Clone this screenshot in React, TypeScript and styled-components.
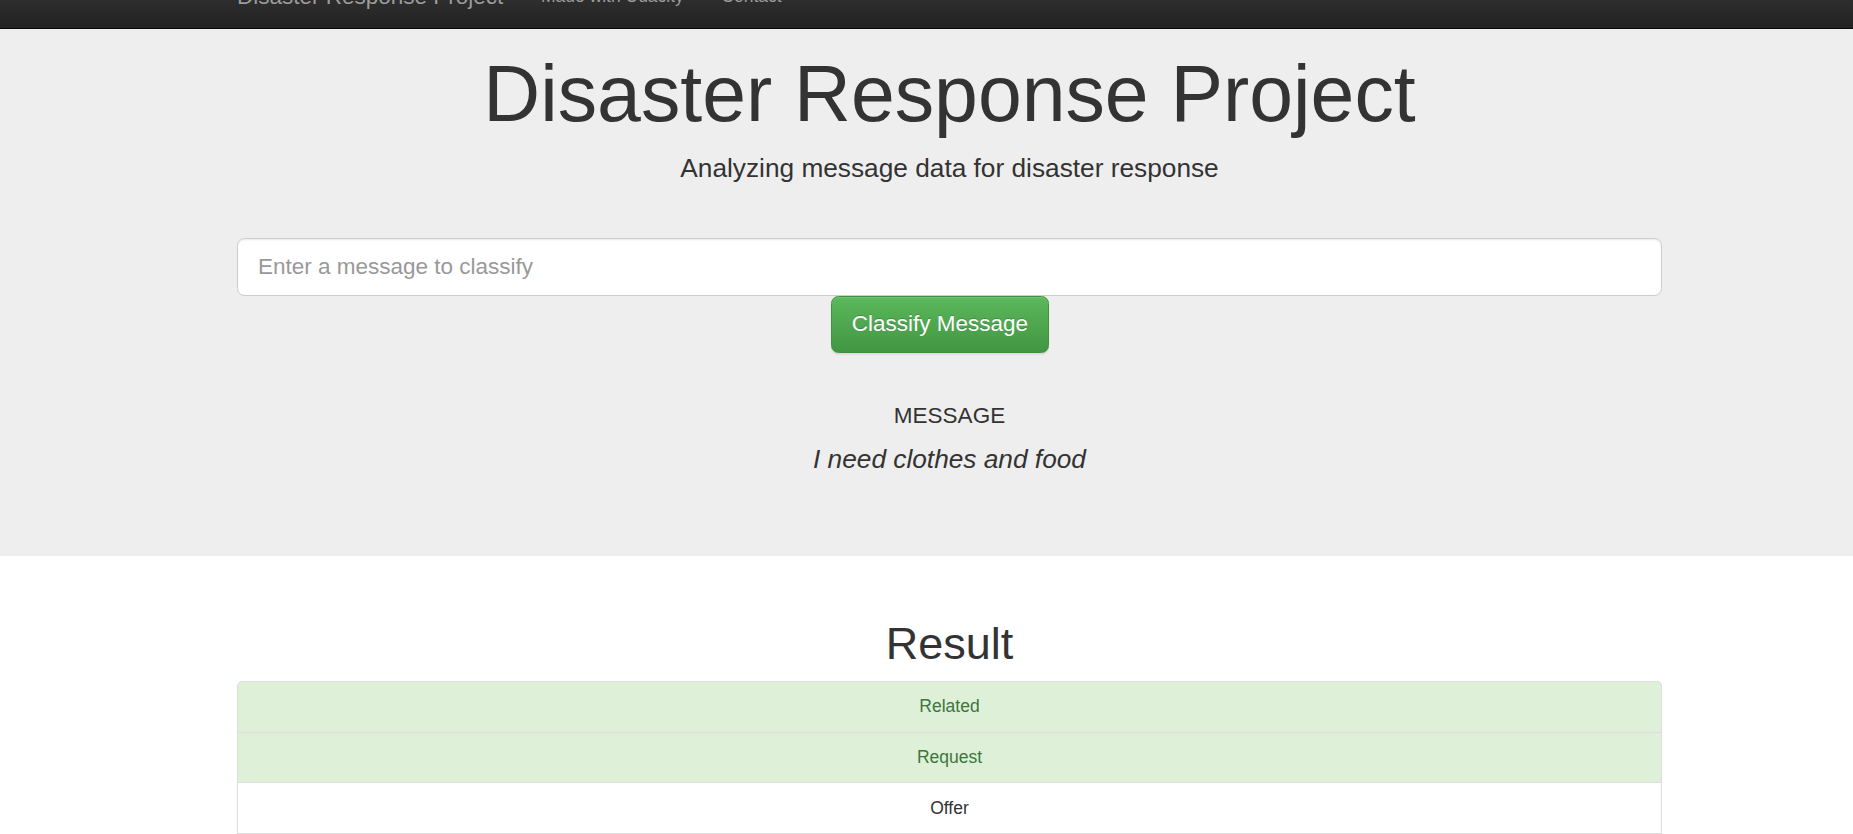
import React from "react";
import styled, { createGlobalStyle } from "styled-components";

const GlobalStyle = createGlobalStyle`
  html, body {
    margin: 0;
    padding: 0;
    background: #fff;
  }
  body {
    font-family: "Liberation Sans", Arial, Helvetica, sans-serif;
    color: #333;
    overflow: hidden;
  }
  * { box-sizing: border-box; }
`;

const Container = styled.div`
  width: 1425px;
  margin-left: calc(50% - 712.5px + 23px);
`;

const NavBar = styled.nav`
  height: 63.75px;
  margin-top: -34.75px;
  background-image: linear-gradient(to bottom, #3c3c3c 0%, #222 100%);
  border-bottom: 1.25px solid #080808;
`;

const NavInner = styled(Container)`
  display: flex;
  align-items: flex-start;
  height: 62.5px;
`;

const Brand = styled.a`
  display: block;
  padding: 18.75px 0;
  font-size: 22.5px;
  line-height: 25px;
  color: #9d9d9d;
  text-decoration: none;
  text-shadow: 0 -1.25px 0 rgba(0, 0, 0, 0.25);
`;

const NavLinks = styled.ul`
  display: flex;
  list-style: none;
  margin: 0 0 0 18.75px;
  padding: 0;
`;

const NavLink = styled.a`
  display: block;
  padding: 18.75px;
  font-size: 17.5px;
  line-height: 25px;
  color: #9d9d9d;
  text-decoration: none;
  text-shadow: 0 -1.25px 0 rgba(0, 0, 0, 0.25);
`;

const Jumbotron = styled.header`
  background: #eee;
  padding: 21.5px 0 77.5px;
`;

const Title = styled.h1`
  margin: 0 0 12.5px;
  font-size: 78.75px;
  line-height: 1.1;
  font-weight: 500;
  text-align: center;
  color: #333;
`;

const Lead = styled.p<{ $italic?: boolean }>`
  margin: 0;
  font-size: 26.25px;
  line-height: 37.5px;
  font-weight: 400;
  text-align: center;
  color: #333;
  font-style: ${(p) => (p.$italic ? "italic" : "normal")};
`;

const Divider = styled.hr`
  margin: 25px 0;
  height: 0;
  border: 0;
  border-top: 1.25px solid #eee;
`;

const QueryInput = styled.input`
  display: block;
  width: 100%;
  height: 57.5px;
  padding: 12.5px 20px;
  font-family: "Liberation Sans", Arial, sans-serif;
  font-size: 22.5px;
  line-height: 1.3333;
  color: #555;
  background: #fff;
  border: 1.25px solid #ccc;
  border-radius: 7.5px;
  box-shadow: inset 0 1.25px 1.25px rgba(0, 0, 0, 0.075);
  outline: none;
  &::placeholder {
    color: #999;
  }
`;

const ButtonRow = styled.div`
  padding-left: 41.66667%;
`;

const ClassifyButton = styled.button`
  display: inline-block;
  height: 57.5px;
  padding: 12.5px 20px;
  font-family: "Liberation Sans", Arial, sans-serif;
  font-size: 22.5px;
  line-height: 30px;
  color: #fff;
  background-image: linear-gradient(to bottom, #5cb85c 0%, #419641 100%);
  border: 1.25px solid #3e8f3e;
  border-radius: 7.5px;
  text-shadow: 0 -1.25px 0 rgba(0, 0, 0, 0.2);
  box-shadow: inset 0 1.25px 0 rgba(255, 255, 255, 0.15),
    0 1.25px 1.25px rgba(0, 0, 0, 0.075);
  cursor: pointer;
`;

const MessageLabel = styled.h4`
  margin: 0 0 12.5px;
  font-size: 22.5px;
  line-height: 1.1;
  font-weight: 400;
  text-align: center;
  color: #333;
`;

const ResultTitle = styled.h1`
  margin: 62.5px 0 12.5px;
  font-size: 45px;
  line-height: 1.1;
  font-weight: 500;
  text-align: center;
  color: #333;
`;

const ListGroup = styled.ul`
  margin: 0 0 25px;
  padding: 0;
  list-style: none;
`;

const ListItem = styled.li<{ $hit?: boolean }>`
  display: block;
  margin-bottom: -1.25px;
  padding: 12.5px 18.75px;
  font-size: 17.5px;
  line-height: 25px;
  text-align: center;
  border: 1.25px solid #ddd;
  background: ${(p) => (p.$hit ? "#dff0d8" : "#fff")};
  color: ${(p) => (p.$hit ? "#3c763d" : "#333")};
  &:first-child {
    border-top-left-radius: 5px;
    border-top-right-radius: 5px;
  }
`;

const results: { name: string; hit: boolean }[] = [
  { name: "Related", hit: true },
  { name: "Request", hit: true },
  { name: "Offer", hit: false },
  { name: "Aid Related", hit: true },
  { name: "Medical Help", hit: false },
  { name: "Medical Products", hit: false },
  { name: "Search And Rescue", hit: false },
  { name: "Security", hit: false },
  { name: "Military", hit: false },
  { name: "Child Alone", hit: false },
  { name: "Water", hit: false },
  { name: "Food", hit: true },
  { name: "Shelter", hit: false },
  { name: "Clothing", hit: true },
];

export default function App() {
  return (
    <>
      <GlobalStyle />
      <NavBar>
        <NavInner>
          <Brand href="#">Disaster Response Project</Brand>
          <NavLinks>
            <li>
              <NavLink href="#">Made with Udacity</NavLink>
            </li>
            <li>
              <NavLink href="#">Contact</NavLink>
            </li>
          </NavLinks>
        </NavInner>
      </NavBar>

      <Jumbotron>
        <Container>
          <Title>Disaster Response Project</Title>
          <Lead>Analyzing message data for disaster response</Lead>
          <Divider />
          <form onSubmit={(e) => e.preventDefault()}>
            <QueryInput type="text" placeholder="Enter a message to classify" />
            <ButtonRow>
              <ClassifyButton type="submit">Classify Message</ClassifyButton>
            </ButtonRow>
          </form>
          <Divider />
          <MessageLabel>MESSAGE</MessageLabel>
          <Lead $italic>I need clothes and food</Lead>
        </Container>
      </Jumbotron>

      <Container>
        <ResultTitle>Result</ResultTitle>
        <ListGroup>
          {results.map((r) => (
            <ListItem key={r.name} $hit={r.hit}>
              {r.name}
            </ListItem>
          ))}
        </ListGroup>
      </Container>
    </>
  );
}
